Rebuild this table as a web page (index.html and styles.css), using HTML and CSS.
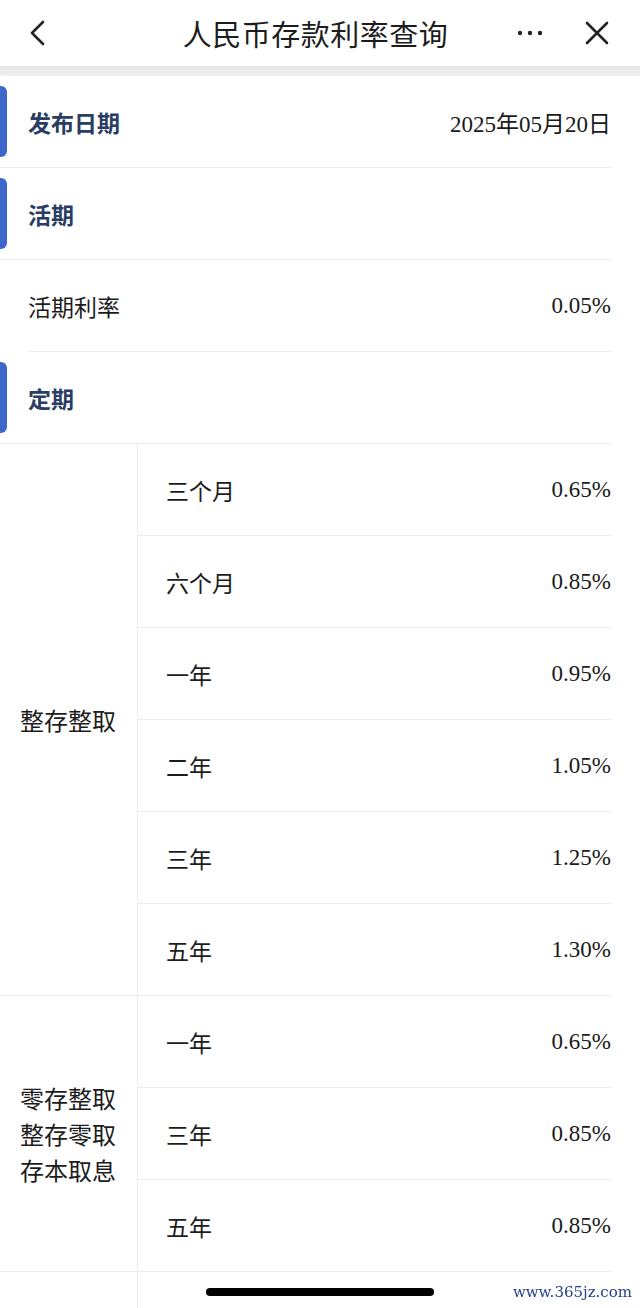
FILE: index.html
```html
<!DOCTYPE html>
<html lang="zh-CN">
<head>
  <meta charset="UTF-8">
  <meta name="viewport" content="width=device-width, initial-scale=1.0">
  <title>人民币存款利率查询</title>
  <link rel="stylesheet" href="styles.css">
</head>
<body>
  <div class="topbar">
    <a href="javascript:;" class="back">
      <svg width="20" height="26" viewBox="0 0 20 26"><polyline points="15,2 4,13 15,24" fill="none" stroke="#222" stroke-width="2.6" stroke-linecap="round" stroke-linejoin="round"/></svg>
    </a>
    <h1 class="topbar-title">人民币存款利率查询</h1>
    <a href="javascript:;" class="more">
      <svg width="26" height="6" viewBox="0 0 26 6"><circle cx="3" cy="3" r="2.2" fill="#222"/><circle cx="13" cy="3" r="2.2" fill="#222"/><circle cx="23" cy="3" r="2.2" fill="#222"/></svg>
    </a>
    <a href="javascript:;" class="close">
      <svg width="24" height="24" viewBox="0 0 24 24"><path d="M2 2L22 22M22 2L2 22" fill="none" stroke="#222" stroke-width="2.6" stroke-linecap="round"/></svg>
    </a>
  </div>
  <div class="band"></div>

  <div class="rates">
    <div class="row head">
      <span class="tab"></span>
      <span class="head-name">发布日期</span>
      <span class="value">2025年05月20日</span>
    </div>
    <div class="row head">
      <span class="tab"></span>
      <span class="head-name">活期</span>
    </div>
    <div class="row item">
      <span class="name">活期利率</span>
      <span class="value">0.05%</span>
    </div>
    <div class="row head">
      <span class="tab"></span>
      <span class="head-name">定期</span>
    </div>

    <div class="group">
      <div class="group-name">整存整取</div>
      <div class="group-rows">
        <div class="row sub"><span class="name">三个月</span><span class="value">0.65%</span></div>
        <div class="row sub"><span class="name">六个月</span><span class="value">0.85%</span></div>
        <div class="row sub"><span class="name">一年</span><span class="value">0.95%</span></div>
        <div class="row sub"><span class="name">二年</span><span class="value">1.05%</span></div>
        <div class="row sub"><span class="name">三年</span><span class="value">1.25%</span></div>
        <div class="row sub"><span class="name">五年</span><span class="value">1.30%</span></div>
      </div>
    </div>

    <div class="group">
      <div class="group-name">零存整取<br>整存零取<br>存本取息</div>
      <div class="group-rows">
        <div class="row sub"><span class="name">一年</span><span class="value">0.65%</span></div>
        <div class="row sub"><span class="name">三年</span><span class="value">0.85%</span></div>
        <div class="row sub"><span class="name">五年</span><span class="value">0.85%</span></div>
      </div>
    </div>

    <!-- 下一组只露出上沿 -->
    <div class="group">
      <div class="group-name"></div>
      <div class="group-rows">
        <div class="row sub"></div>
      </div>
    </div>
  </div>

  <div class="home-bar"></div>
  <div class="watermark">www.365jz.com</div>
</body>
</html>
```

FILE: styles.css
```css
*{
  margin: 0;
  padding: 0;
  box-sizing: border-box;
}
html,body{
  background: #fff;
  overflow: hidden;
}
body{
  font-family: "Noto Sans CJK SC", "Noto Sans", sans-serif;
  color: #1c1c1c;
  width: 640px;
  height: 1308px;
}
a{
  color: inherit;
  text-decoration: none;
}

/* 顶部导航 */
.topbar{
  height: 66px;
  display: flex;
  align-items: center;
  padding: 0 31px 0 28px;
}
.topbar-title{
  flex: 1;
  text-align: center;
  font-size: 29px;
  font-weight: normal;
  letter-spacing: 0.5px;
  padding-left: 66px;
}
.back{
  display: flex;
}
.more{
  display: flex;
  margin-right: 42px;
}
.close{
  display: flex;
}
.band{
  height: 10px;
  background: linear-gradient(#e6e6e6, #f0f0f0);
}

/* 列表 */
.rates{
  width: 612px;
}
.row{
  height: 92px;
  display: flex;
  align-items: center;
  border-bottom: 1px solid #ececec;
}
.head .tab{
  width: 7px;
  height: 71px;
  background: #3d68c9;
  border-radius: 0 6px 6px 0;
}
.head-name{
  margin-left: 21px;
  font-size: 23px;
  font-weight: bold;
  color: #2a3d63;
}
.item{
  margin-left: 28px;
}
.name{
  font-size: 23px;
}
.value{
  margin-left: auto;
  margin-right: 1px;
  font-family: "Liberation Serif", "Noto Sans CJK SC", serif;
  font-size: 23px;
  color: #1a1a1a;
}

/* 定期表格 */
.group{
  display: grid;
  grid-template-columns: 138px 1fr;
}
.group-name{
  display: flex;
  align-items: center;
  padding-left: 20px;
  border-right: 1px solid #ececec;
  border-bottom: 1px solid #ececec;
  font-size: 24px;
  line-height: 36px;
}
.sub{
  padding-left: 28px;
}

/* 底部 */
.home-bar{
  position: fixed;
  left: 206px;
  top: 1288px;
  width: 228px;
  height: 8px;
  border-radius: 4px;
  background: #000;
}
.watermark{
  position: fixed;
  right: 8px;
  top: 1283px;
  font-family: "DejaVu Serif", serif;
  font-size: 15px;
  color: #23418c;
  background: rgba(255,255,255,0.85);
}
```
